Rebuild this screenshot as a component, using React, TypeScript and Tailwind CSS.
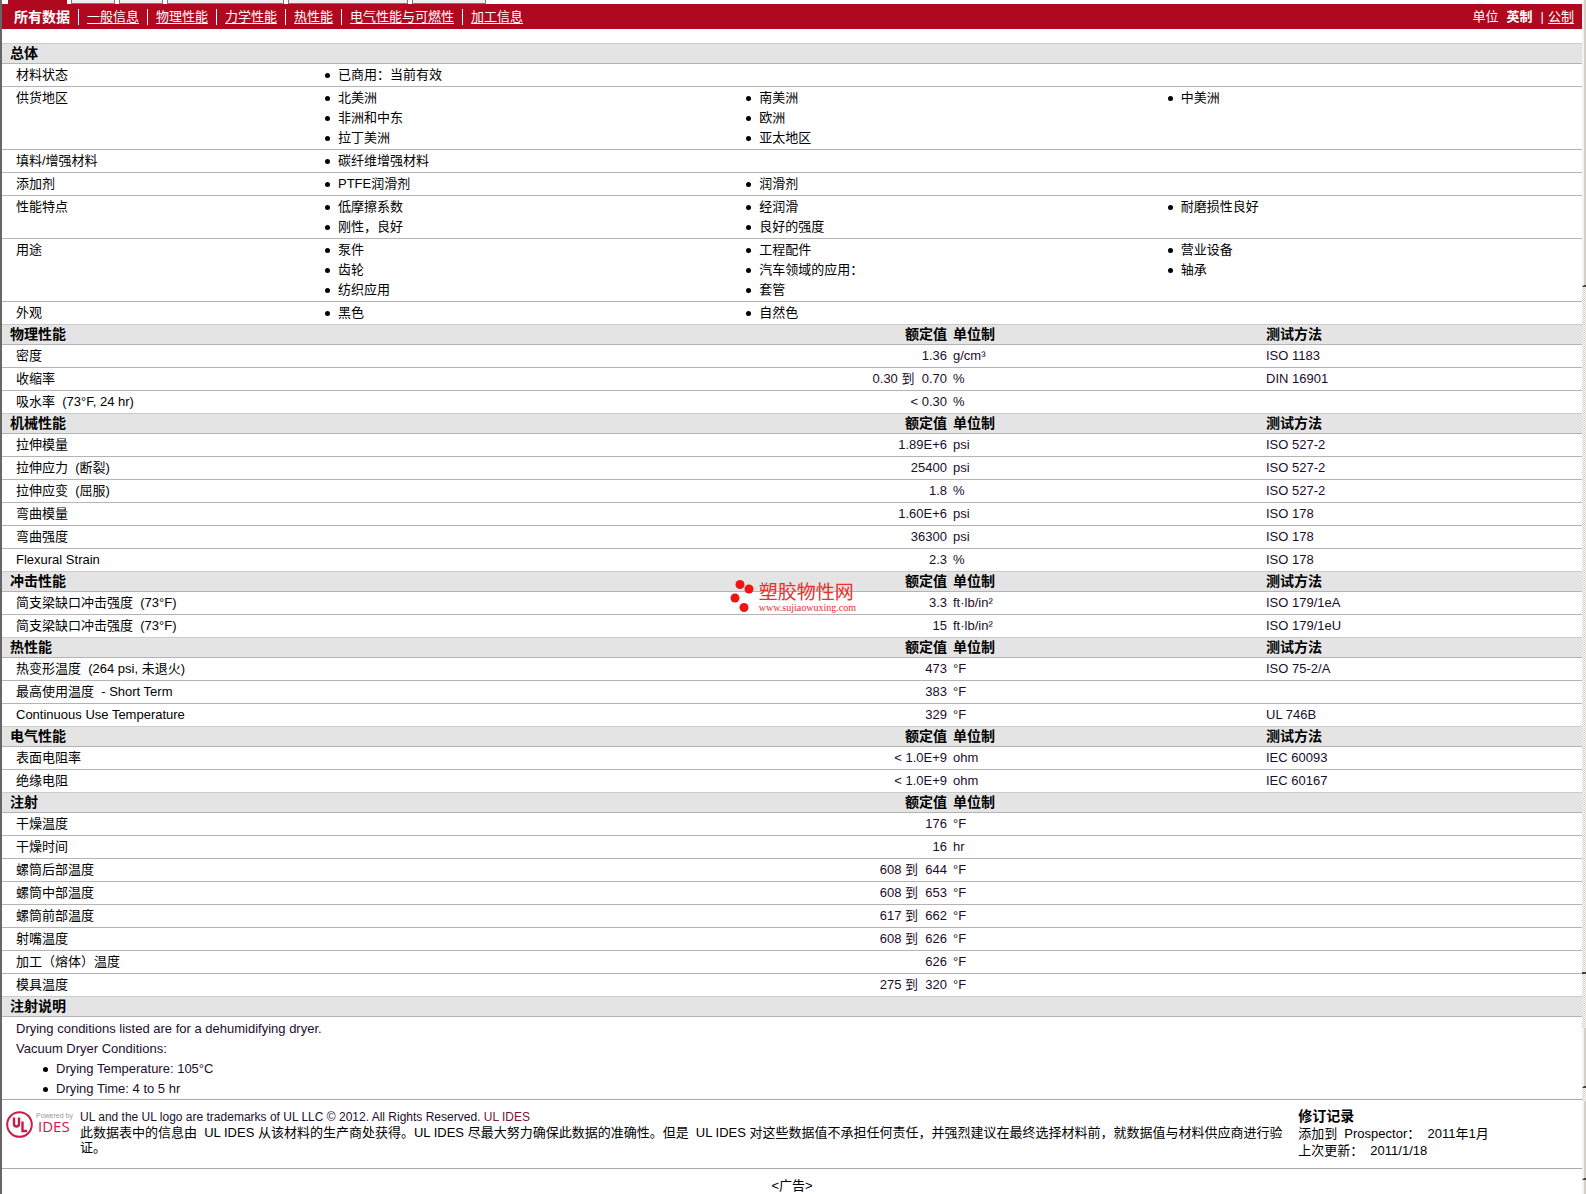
import { Fragment } from "react";

const navItems = ["一般信息", "物理性能", "力学性能", "热性能", "电气性能与可燃性", "加工信息"];

const tabs = [
  { width: "w-[59px]", active: true },
  { width: "w-11", active: false },
  { width: "w-11", active: false },
  { width: "w-[117px]", active: false },
  { width: "w-[120px]", active: false },
  { width: "w-[74px]", active: false },
];

const general: { label: string; columns: string[][] }[] = [
  { label: "材料状态", columns: [["已商用：当前有效"]] },
  {
    label: "供货地区",
    columns: [["北美洲", "非洲和中东", "拉丁美洲"], ["南美洲", "欧洲", "亚太地区"], ["中美洲"]],
  },
  { label: "填料/增强材料", columns: [["碳纤维增强材料"]] },
  { label: "添加剂", columns: [["PTFE润滑剂"], ["润滑剂"]] },
  {
    label: "性能特点",
    columns: [["低摩擦系数", "刚性，良好"], ["经润滑", "良好的强度"], ["耐磨损性良好"]],
  },
  {
    label: "用途",
    columns: [["泵件", "齿轮", "纺织应用"], ["工程配件", "汽车领域的应用：", "套管"], ["营业设备", "轴承"]],
  },
  { label: "外观", columns: [["黑色"], ["自然色"]] },
];

// name, value, unit, test method
const sections: { title: string; method: boolean; rows: string[][] }[] = [
  {
    title: "物理性能",
    method: true,
    rows: [
      ["密度", "1.36", "g/cm³", "ISO 1183"],
      ["收缩率", "0.30 到  0.70", "%", "DIN 16901"],
      ["吸水率  (73°F, 24 hr)", "< 0.30", "%", ""],
    ],
  },
  {
    title: "机械性能",
    method: true,
    rows: [
      ["拉伸模量", "1.89E+6", "psi", "ISO 527-2"],
      ["拉伸应力  (断裂)", "25400", "psi", "ISO 527-2"],
      ["拉伸应变  (屈服)", "1.8", "%", "ISO 527-2"],
      ["弯曲模量", "1.60E+6", "psi", "ISO 178"],
      ["弯曲强度", "36300", "psi", "ISO 178"],
      ["Flexural Strain", "2.3", "%", "ISO 178"],
    ],
  },
  {
    title: "冲击性能",
    method: true,
    rows: [
      ["简支梁缺口冲击强度  (73°F)", "3.3", "ft·lb/in²", "ISO 179/1eA"],
      ["简支梁缺口冲击强度  (73°F)", "15", "ft·lb/in²", "ISO 179/1eU"],
    ],
  },
  {
    title: "热性能",
    method: true,
    rows: [
      ["热变形温度  (264 psi, 未退火)", "473", "°F", "ISO 75-2/A"],
      ["最高使用温度  - Short Term", "383", "°F", ""],
      ["Continuous Use Temperature", "329", "°F", "UL 746B"],
    ],
  },
  {
    title: "电气性能",
    method: true,
    rows: [
      ["表面电阻率", "< 1.0E+9", "ohm", "IEC 60093"],
      ["绝缘电阻", "< 1.0E+9", "ohm", "IEC 60167"],
    ],
  },
  {
    title: "注射",
    method: false,
    rows: [
      ["干燥温度", "176", "°F", ""],
      ["干燥时间", "16", "hr", ""],
      ["螺筒后部温度", "608 到  644", "°F", ""],
      ["螺筒中部温度", "608 到  653", "°F", ""],
      ["螺筒前部温度", "617 到  662", "°F", ""],
      ["射嘴温度", "608 到  626", "°F", ""],
      ["加工（熔体）温度", "626", "°F", ""],
      ["模具温度", "275 到  320", "°F", ""],
    ],
  },
];

const SectionTitle = ({ children }: { children: string }) => (
  <h2 className="h-5 border-b border-[#b4b4b4] bg-[#e4e4e4] pl-2 text-sm leading-[19px] font-bold">{children}</h2>
);

const Bullets = ({ items }: { items: string[] }) => (
  <ul>
    {items.map((item) => (
      <li key={item} className="flex h-5 items-center">
        <span className="mr-2 ml-[7px] size-[5px] rounded-full bg-black" />
        {item}
      </li>
    ))}
  </ul>
);

const Watermark = () => (
  <div className="pointer-events-none absolute top-[579px] left-[46%] flex items-center gap-1 text-[#e8302c]">
    <svg width="26" height="34" viewBox="0 0 26 34" fill="#f01414">
      <circle cx="11" cy="5.5" r="4.5" />
      <circle cx="20" cy="10" r="4.5" />
      <circle cx="6" cy="19" r="4.5" />
      <circle cx="15" cy="28.5" r="4.5" />
    </svg>
    <div className="pt-1">
      <div className="text-[19px] leading-5">塑胶物性网</div>
      <div className="font-['Liberation_Serif'] text-[10px] leading-[10px]">www.sujiaowuxing.com</div>
    </div>
  </div>
);

const UlLogo = () => (
  <svg width="68" height="34" viewBox="0 0 68 34" className="shrink-0">
    <circle cx="14.5" cy="14.5" r="12.3" fill="none" stroke="#cc1a42" strokeWidth="2" />
    {/* stepped U and L strokes */}
    <path d="M9 7.5V13.7Q9 16.5 11.5 16.5T14 13.7V7.5" fill="none" stroke="#cc1a42" strokeWidth="2.4" />
    <path d="M17.5 11.5V21H22" fill="none" stroke="#cc1a42" strokeWidth="2.4" />
    <text x="31" y="8" fontSize="7" fill="#999999">Powered by</text>
    <text x="33" y="22" fontSize="15" fontFamily="Open Sans" fontWeight="500" fill="#cc1a42">IDES</text>
  </svg>
);

const Track = ({ className }: { className: string }) => (
  <div
    className={`border-[#444] bg-[repeating-conic-gradient(#d4d0c8_0%_25%,#fff_0%_50%)] bg-size-[2px_2px] ${className}`}
  />
);

const Thumb = ({ className }: { className: string }) => (
  <div className={`border-l-2 border-b-[#444] border-l-[#f4f2ee] bg-[#d4d0c8] ${className}`} />
);

const App = () => {
  return (
    <div className="flex bg-white font-['Liberation_Sans','Noto_Sans_CJK_SC',sans-serif] text-[13px] text-black">
      <div className="w-0.5 shrink-0 bg-[#666]" />
      <main className="relative min-w-0 grow">
        <div className="flex h-1 gap-1 pl-1.5">
          {tabs.map((tab, i) => (
            <div
              key={i}
              className={`${tab.width} ${tab.active ? "bg-[#b0081e]" : "border-x border-b border-[#777] bg-[#eee]"}`}
            />
          ))}
        </div>
        <header className="flex h-[25px] items-center justify-between bg-[#b0081e] pr-2 pl-3 text-white">
          <nav className="flex items-center">
            <b className="text-sm">所有数据</b>
            {navItems.map((item) => (
              <Fragment key={item}>
                <span className="mx-2 h-4 w-px bg-white" />
                <a href="#" className="underline underline-offset-2">{item}</a>
              </Fragment>
            ))}
          </nav>
          <div className="flex items-center">
            单位
            <b className="mx-2">英制</b>
            <span className="mr-1">|</span>
            <a href="#" className="underline underline-offset-2">公制</a>
          </div>
        </header>

        <section className="mt-[14px] border-t border-[#ccc]">
          <SectionTitle>总体</SectionTitle>
          {general.map((row) => (
            <div
              key={row.label}
              className="grid grid-cols-[20%_1fr_1fr_1fr] border-b border-[#b4b4b4] py-px leading-5 last:border-[#ccc]"
            >
              <div className="pl-[14px]">{row.label}</div>
              {row.columns.map((items, i) => (
                <Bullets key={i} items={items} />
              ))}
            </div>
          ))}
        </section>

        <table className="w-full table-fixed border-separate border-spacing-0">
          <colgroup>
            <col className="w-[40%]" />
            <col className="w-[20%]" />
            <col className="w-[20%]" />
            <col className="w-[20%]" />
          </colgroup>
          {sections.map((section) => (
            <tbody key={section.title}>
              <tr className="h-5 bg-[#e4e4e4] text-left text-sm leading-[19px] *:border-b *:border-[#b4b4b4]">
                <th className="p-0 pl-2">{section.title}</th>
                <th className="p-0 pr-[3px] text-right">额定值</th>
                <th className="p-0 pl-[3px]">单位制</th>
                <th className="p-0">{section.method && "测试方法"}</th>
              </tr>
              {section.rows.map(([name, value, unit, method], i) => (
                <tr
                  key={i}
                  className="h-[23px] leading-[22px] whitespace-pre *:border-b *:border-[#b4b4b4] last:*:border-[#ccc]"
                >
                  <td className="p-0 pl-[14px]">{name}</td>
                  <td className="p-0 pr-[3px] text-right text-[#1c0c2c]">{value}</td>
                  <td className="p-0 pl-[3px] text-[#1c0c2c]">{unit}</td>
                  <td className="p-0 text-[#1c0c2c]">{method}</td>
                </tr>
              ))}
            </tbody>
          ))}
        </table>

        <section>
          <SectionTitle>注射说明</SectionTitle>
          <div className="border-b border-[#aaa] pt-0.5 pl-[14px] leading-5 text-[#1c0c2c]">
            <p>Drying conditions listed are for a dehumidifying dryer.</p>
            <p>Vacuum Dryer Conditions:</p>
            <div className="pl-5">
              <Bullets items={["Drying Temperature: 105°C", "Drying Time: 4 to 5 hr"]} />
            </div>
          </div>
        </section>

        <footer>
          <div className="flex h-[69px] items-start border-b border-[#aaa] pt-[10px] pl-[3px] leading-[15px]">
            <UlLogo />
            <div className="ml-[7px] min-w-0 flex-1 pr-3">
              <p className="text-xs leading-[15px] text-[#1c0c2c]">
                UL and the UL logo are trademarks of UL LLC © 2012. All Rights Reserved.{" "}
                <a href="#" className="text-[#7a1038]">UL IDES</a>
              </p>
              <p>
                此数据表中的信息由&nbsp; UL IDES 从该材料的生产商处获得。UL IDES 尽最大努力确保此数据的准确性。但是&nbsp; UL IDES
                对这些数据值不承担任何责任，并强烈建议在最终选择材料前，就数据值与材料供应商进行验证。
              </p>
            </div>
            <div className="-mt-0.5 w-[18%] shrink-0 leading-[17px] whitespace-pre">
              <h3 className="text-sm leading-[17px] font-bold">修订记录</h3>
              <p>添加到  Prospector：  2011年1月</p>
              <p>上次更新：  2011/1/18</p>
            </div>
          </div>
          <p className="pt-[9px] text-center leading-4">&lt;广告&gt;</p>
        </footer>
        <Watermark />
      </main>
      <div className="flex w-1 shrink-0 flex-col">
        <Thumb className="grow-[285] border-b-2" />
        <Track className="grow-[685] border-b-2" />
        <Track className="grow-[54]" />
        <Thumb className="grow-[58] border-b-2" />
        <Track className="grow-[13]" />
        <Thumb className="grow-[77] border-b-2" />
        <Thumb className="grow-[14]" />
      </div>
    </div>
  );
};

export default App;
